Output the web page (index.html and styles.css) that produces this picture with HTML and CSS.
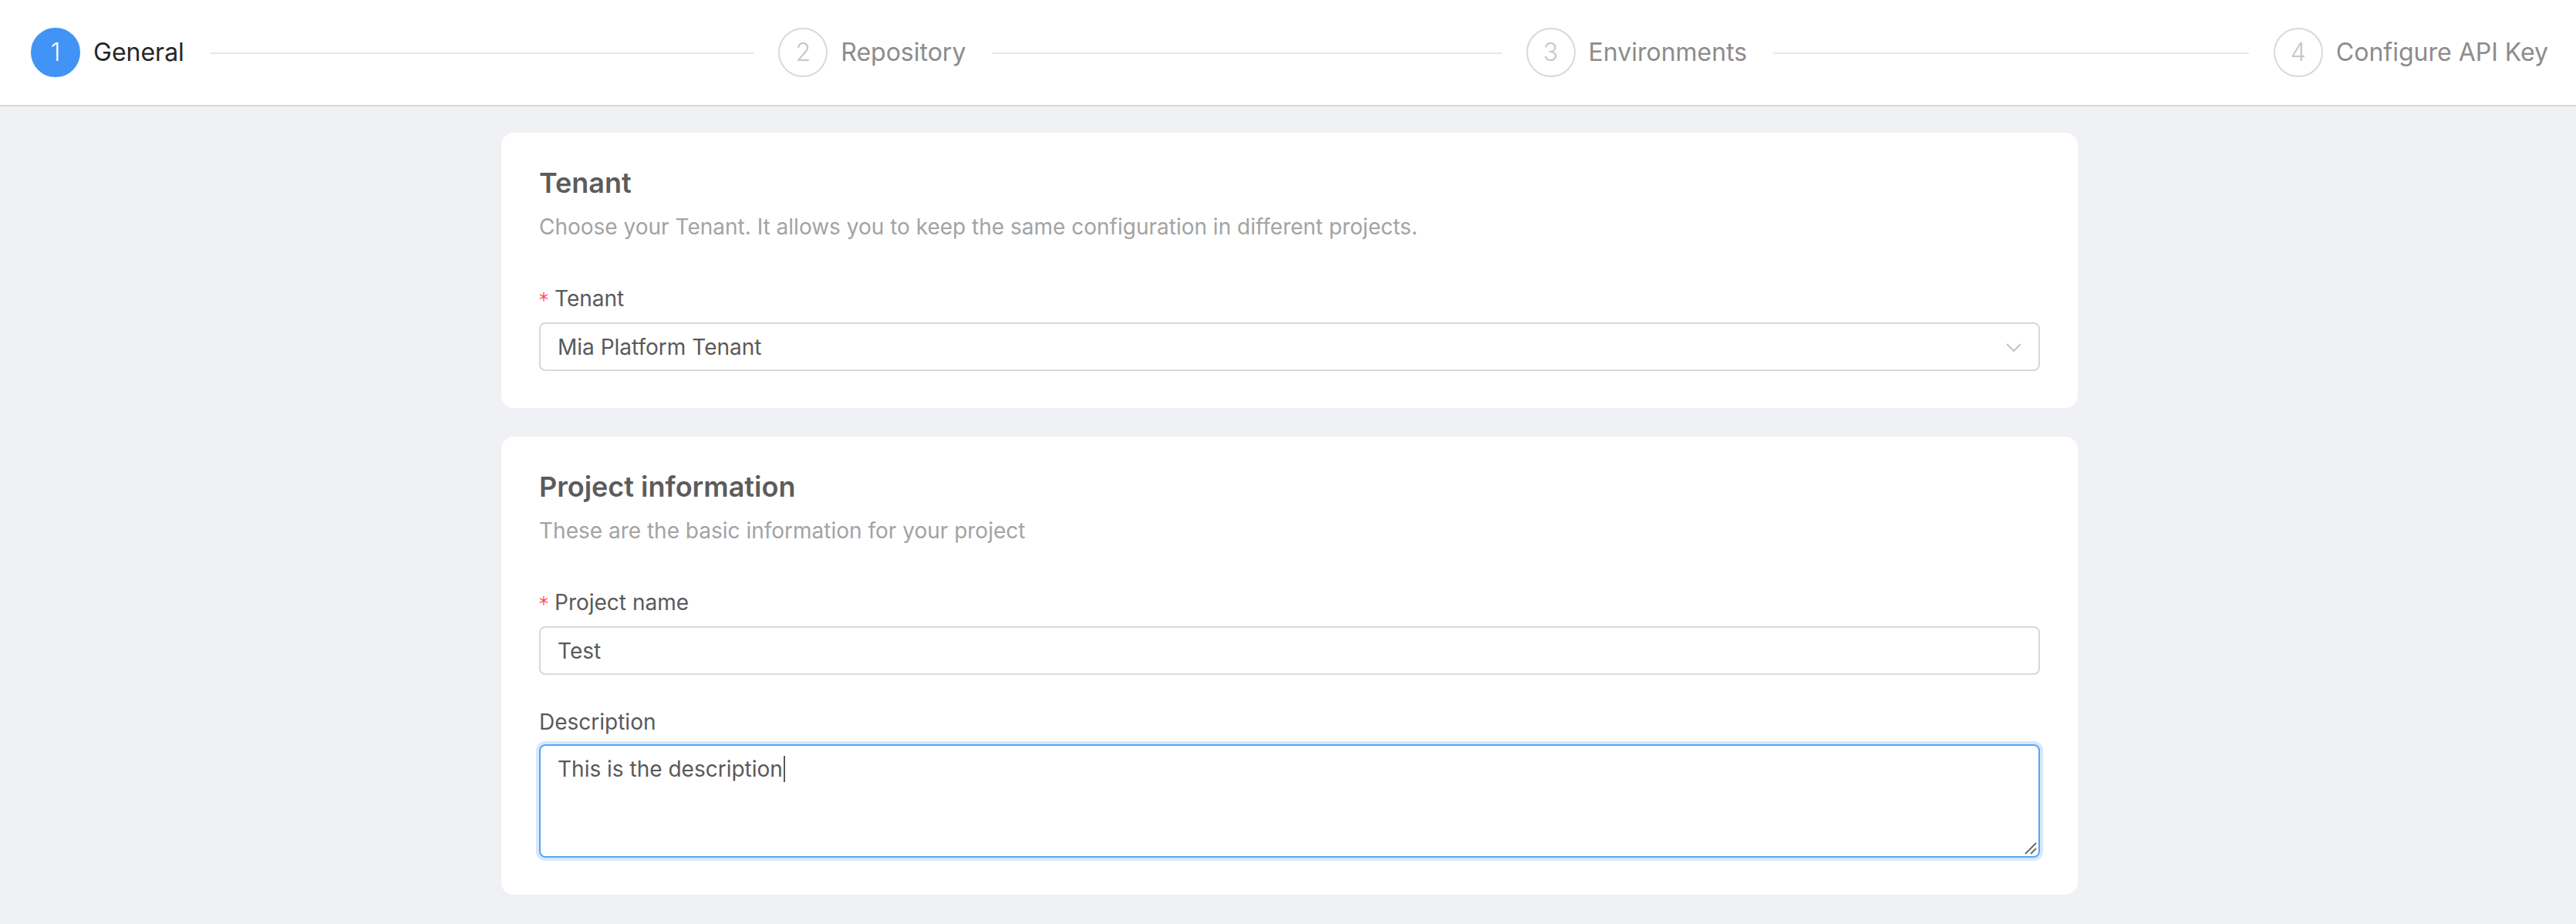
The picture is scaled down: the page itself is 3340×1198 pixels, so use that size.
FILE: index.html
```html
<!DOCTYPE html>
<html lang="en">
<head>
<meta charset="utf-8">
<title>Create project</title>
<link rel="stylesheet" href="styles.css">
</head>
<body>
<header class="steps-bar">
  <div class="steps">
    <div class="step step-active">
      <span class="step-icon">1</span>
      <span class="step-title">General</span>
      <span class="step-line"></span>
    </div>
    <div class="step">
      <span class="step-icon">2</span>
      <span class="step-title">Repository</span>
      <span class="step-line"></span>
    </div>
    <div class="step">
      <span class="step-icon">3</span>
      <span class="step-title">Environments</span>
      <span class="step-line"></span>
    </div>
    <div class="step step-last">
      <span class="step-icon">4</span>
      <span class="step-title">Configure API Key</span>
    </div>
  </div>
</header>
<main class="content">
  <section class="card">
    <h2 class="card-title">Tenant</h2>
    <p class="card-desc">Choose your Tenant. It allows you to keep the same configuration in different projects.</p>
    <div class="form-item">
      <label class="form-label"><span class="req">*</span>Tenant</label>
      <div class="select">
        <span class="select-value">Mia Platform Tenant</span>
        <svg class="select-arrow" viewBox="0 0 24 24" width="24" height="24"><polyline points="3,8 12,17 21,8" fill="none" stroke="#c4c4c4" stroke-width="2"/></svg>
      </div>
    </div>
  </section>
  <section class="card">
    <h2 class="card-title">Project information</h2>
    <p class="card-desc">These are the basic information for your project</p>
    <div class="form-item form-item-spaced">
      <label class="form-label"><span class="req">*</span>Project name</label>
      <div class="input">Test</div>
    </div>
    <div class="form-item">
      <label class="form-label">Description</label>
      <div class="textarea" role="textbox">This is the description<span class="caret"></span><svg class="resize-grip" viewBox="0 0 16 16" width="16" height="16"><line x1="1" y1="15" x2="15" y2="1" stroke="#6b6b6b" stroke-width="2"/><line x1="8" y1="15" x2="15" y2="8" stroke="#6b6b6b" stroke-width="2"/></svg></div>
    </div>
  </section>
</main>
</body>
</html>
```

FILE: styles.css
```css
* { box-sizing: border-box; }
html, body { margin: 0; padding: 0; }
body {
  background: #f0f1f4;
  font-family: Inter, "Noto Sans", "Liberation Sans", sans-serif;
  color: #595959;
  width: 3340px;
  height: 1198px;
  overflow: hidden;
}

.steps-bar {
  background: #ffffff;
  height: 138px;
  border-bottom: 2px solid #d6d6d8;
  padding: 0 36px 0 40px;
  display: flex;
  align-items: center;
}
.steps {
  display: flex;
  align-items: center;
  width: 100%;
}
.step {
  flex: 1;
  display: flex;
  align-items: center;
  min-width: 0;
}
.step-last { flex: none; }
.step-icon {
  flex: none;
  width: 64px;
  height: 64px;
  border-radius: 50%;
  border: 2px solid #d9d9d9;
  color: #c6c6c6;
  font-size: 32px;
  font-weight: 300;
  display: flex;
  align-items: center;
  justify-content: center;
  line-height: 1;
}
.step-title {
  flex: none;
  margin-left: 17px;
  font-size: 32px;
  line-height: 64px;
  color: #8c8c8c;
}
.step-line {
  flex: 1;
  height: 2px;
  background: #e8e8e8;
  margin: 2px 32px 0 34px;
}
.step-active .step-icon {
  background: #4194f6;
  border-color: #4194f6;
  color: #ffffff;
}
.step-active .step-title { color: #262626; }

.content {
  display: flex;
  flex-direction: column;
  align-items: center;
  padding-top: 34px;
  gap: 37px;
  padding-left: 4px;
}
.card {
  width: 2044px;
  background: #ffffff;
  border-radius: 16px;
  padding: 41px 49px 48px;
}
.card-title {
  margin: 0;
  font-size: 36px;
  line-height: 48px;
  font-weight: 600;
  color: #5c5c5c;
}
.card-desc {
  margin: 13px 0 0;
  font-size: 28px;
  line-height: 40px;
  color: #a3a3a3;
}
.form-item { margin-top: 53px; }
.form-item-spaced + .form-item { margin-top: 41px; }
.form-label {
  display: block;
  font-size: 28px;
  line-height: 40px;
  color: #595959;
  margin-bottom: 9px;
}
.req {
  color: #ff4d4f;
  margin-right: 8px;
  font-family: "DejaVu Sans", sans-serif;
  font-size: 24px;
}
.select, .input {
  height: 63px;
  border: 2px solid #d9d9d9;
  border-radius: 8px;
  padding: 0 22px;
  display: flex;
  align-items: center;
  font-size: 28px;
  color: #595959;
}
.select-value { flex: 1; }
.select-arrow { flex: none; margin-right: -2px; }
.textarea {
  position: relative;
  height: 147px;
  border: 2px solid #55a5f7;
  border-radius: 8px;
  box-shadow: 0 0 0 4px #d7e8fd;
  padding: 8px 22px;
  font-size: 28px;
  line-height: 44px;
  color: #595959;
}
.caret {
  display: inline-block;
  width: 2px;
  height: 34px;
  background: #595959;
  vertical-align: -7px;
  margin-left: 1px;
}
.resize-grip {
  position: absolute;
  right: 2px;
  bottom: 2px;
}
```
